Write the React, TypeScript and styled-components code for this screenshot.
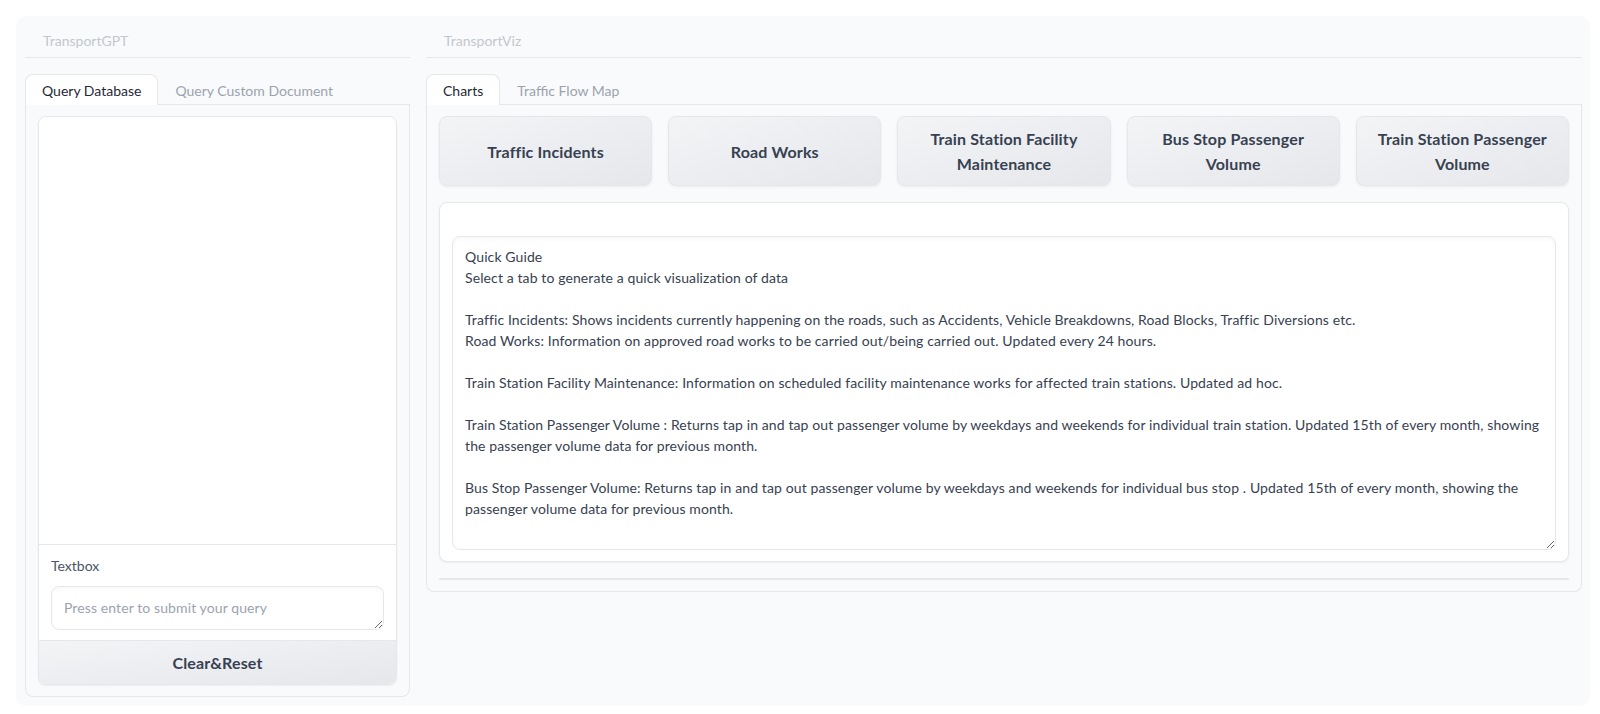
import React, { useState } from "react";
import styled, { createGlobalStyle } from "styled-components";

const GlobalStyle = createGlobalStyle`
  html, body {
    margin: 0;
    padding: 0;
    background: #ffffff;
  }
  body {
    font-family: Lato, "Noto Sans", "Liberation Sans", sans-serif;
    color: #374151;
    -webkit-font-smoothing: antialiased;
  }
  * { box-sizing: border-box; }
`;

const Page = styled.div`
  width: 1600px;
  height: 714px;
  padding: 16px 10px 8px 16px;
`;

const Container = styled.div`
  height: 690px;
  background: #f9fafb;
  border-radius: 10px;
  padding: 8px 8px 0 9px;
  display: grid;
  grid-template-columns: 385px 1fr;
  column-gap: 16px;
  align-items: start;
`;

const Column = styled.div`
  display: flex;
  flex-direction: column;
  min-width: 0;
`;

const Heading = styled.div`
  height: 34px;
  line-height: 34px;
  padding-left: 18px;
  font-size: 14px;
  color: #c3c7ce;
  border-bottom: 1px solid #e5e7eb;
  margin-bottom: 16px;
`;

const TabNav = styled.div`
  display: flex;
  border-bottom: 1px solid #e5e7eb;
  height: 31px;
`;

const Tab = styled.button<{ $active?: boolean }>`
  height: 31px;
  padding: 0 16px;
  margin-bottom: -1px;
  font-family: inherit;
  font-size: 14px;
  line-height: 29px;
  cursor: pointer;
  border: 1px solid ${(p) => (p.$active ? "#e5e7eb" : "transparent")};
  border-bottom: none;
  border-radius: 8px 8px 0 0;
  background: ${(p) => (p.$active ? "#ffffff" : "transparent")};
  color: ${(p) => (p.$active ? "#1f2937" : "#9ca3af")};
`;

const Panel = styled.div`
  border: 1px solid #e5e7eb;
  border-top: none;
  border-radius: 0 0 8px 8px;
  padding: 11px 12px 11px 12px;
  display: flex;
  flex-direction: column;
  gap: 16px;
`;

const Group = styled.div`
  background: #ffffff;
  border: 1px solid #e5e7eb;
  border-radius: 8px;
  overflow: hidden;
  box-shadow: 0 1px 2px rgba(0, 0, 0, 0.05);
  display: flex;
  flex-direction: column;
`;

const ChatArea = styled.div`
  height: 427px;
  background: #ffffff;
`;

const Field = styled.label`
  display: flex;
  flex-direction: column;
  border-top: 1px solid #e5e7eb;
  padding: 11px 12px 10px 12px;
  background: #ffffff;
`;

const FieldLabel = styled.span`
  font-size: 14px;
  line-height: 20px;
  color: #4b5563;
  margin-bottom: 10px;
`;

const QueryInput = styled.textarea`
  height: 44px;
  width: 100%;
  resize: vertical;
  border: 1px solid #e5e7eb;
  border-radius: 8px;
  padding: 10px 12px;
  font-family: inherit;
  font-size: 14px;
  line-height: 21px;
  letter-spacing: 0.1px;
  color: #374151;
  background: #ffffff;
  box-shadow: inset 0 2px 4px rgba(0, 0, 0, 0.03);
  outline: none;
  overflow: hidden;
  &::placeholder {
    color: #9ca3af;
  }
`;

const SecondaryButton = styled.button<{ $flat?: boolean }>`
  font-family: inherit;
  font-size: 16px;
  font-weight: 700;
  line-height: 25px;
  letter-spacing: 0.15px;
  color: #374151;
  background: linear-gradient(to bottom right, #f3f4f6, #e5e7eb);
  cursor: pointer;
  border: ${(p) => (p.$flat ? "none" : "1px solid #e5e7eb")};
  border-top: 1px solid #e5e7eb;
  border-radius: ${(p) => (p.$flat ? "0" : "8px")};
  box-shadow: ${(p) => (p.$flat ? "none" : "0 1px 3px rgba(0,0,0,0.06)")};
`;

const ResetButton = styled(SecondaryButton)`
  height: 44px;
`;

const ButtonRow = styled.div`
  display: grid;
  grid-template-columns: repeat(5, 1fr);
  gap: 16px;
`;

const ChartButton = styled(SecondaryButton)`
  height: 70px;
  padding: 0 16px;
`;

const GuideBlock = styled.div`
  background: #ffffff;
  border: 1px solid #e5e7eb;
  border-radius: 8px;
  box-shadow: 0 1px 2px rgba(0, 0, 0, 0.05);
  padding: 33px 12px 11px 12px;
`;

const GuideText = styled.textarea`
  display: block;
  width: 100%;
  height: 314px;
  resize: vertical;
  border: 1px solid #e5e7eb;
  border-radius: 8px;
  padding: 9px 12px 10px 12px;
  font-family: inherit;
  font-size: 14px;
  line-height: 21px;
  letter-spacing: 0.11px;
  color: #374151;
  background: #ffffff;
  white-space: pre;
  overflow: hidden;
  outline: none;
  box-shadow: inset 0 2px 4px rgba(0, 0, 0, 0.03);
`;

const Divider = styled.div`
  height: 2px;
  background: #e5e7eb;
  border-radius: 1px;
`;

const guide = [
  "Quick Guide",
  "Select a tab to generate a quick visualization of data",
  "",
  "Traffic Incidents: Shows incidents currently happening on the roads, such as Accidents, Vehicle Breakdowns, Road Blocks, Traffic Diversions etc.",
  "Road Works: Information on approved road works to be carried out/being carried out. Updated every 24 hours.",
  "",
  "Train Station Facility Maintenance: Information on scheduled facility maintenance works for affected train stations. Updated ad hoc.",
  "",
  "Train Station Passenger Volume : Returns tap in and tap out passenger volume by weekdays and weekends for individual train station. Updated 15th of every month, showing",
  "the passenger volume data for previous month.",
  "",
  "Bus Stop Passenger Volume: Returns tap in and tap out passenger volume by weekdays and weekends for individual bus stop . Updated 15th of every month, showing the",
  "passenger volume data for previous month.",
  "",
].join("\n");

const chartButtons = [
  "Traffic Incidents",
  "Road Works",
  "Train Station Facility Maintenance",
  "Bus Stop Passenger Volume",
  "Train Station Passenger Volume",
];

export default function App() {
  const [leftTab, setLeftTab] = useState(0);
  const [rightTab, setRightTab] = useState(0);
  return (
    <>
      <GlobalStyle />
      <Page>
        <Container>
          <Column>
            <Heading>TransportGPT</Heading>
            <TabNav>
              <Tab $active={leftTab === 0} onClick={() => setLeftTab(0)}>
                Query Database
              </Tab>
              <Tab $active={leftTab === 1} onClick={() => setLeftTab(1)}>
                Query Custom Document
              </Tab>
            </TabNav>
            <Panel>
              <Group>
                <ChatArea />
                <Field>
                  <FieldLabel>Textbox</FieldLabel>
                  <QueryInput rows={1} placeholder="Press enter to submit your query" />
                </Field>
                <ResetButton $flat>Clear&amp;Reset</ResetButton>
              </Group>
            </Panel>
          </Column>
          <Column>
            <Heading>TransportViz</Heading>
            <TabNav>
              <Tab $active={rightTab === 0} onClick={() => setRightTab(0)}>
                Charts
              </Tab>
              <Tab $active={rightTab === 1} onClick={() => setRightTab(1)}>
                Traffic Flow Map
              </Tab>
            </TabNav>
            <Panel>
              <ButtonRow>
                {chartButtons.map((b) => (
                  <ChartButton key={b}>{b}</ChartButton>
                ))}
              </ButtonRow>
              <GuideBlock>
                <GuideText readOnly wrap="off" value={guide} />
              </GuideBlock>
              <Divider />
            </Panel>
          </Column>
        </Container>
      </Page>
    </>
  );
}
